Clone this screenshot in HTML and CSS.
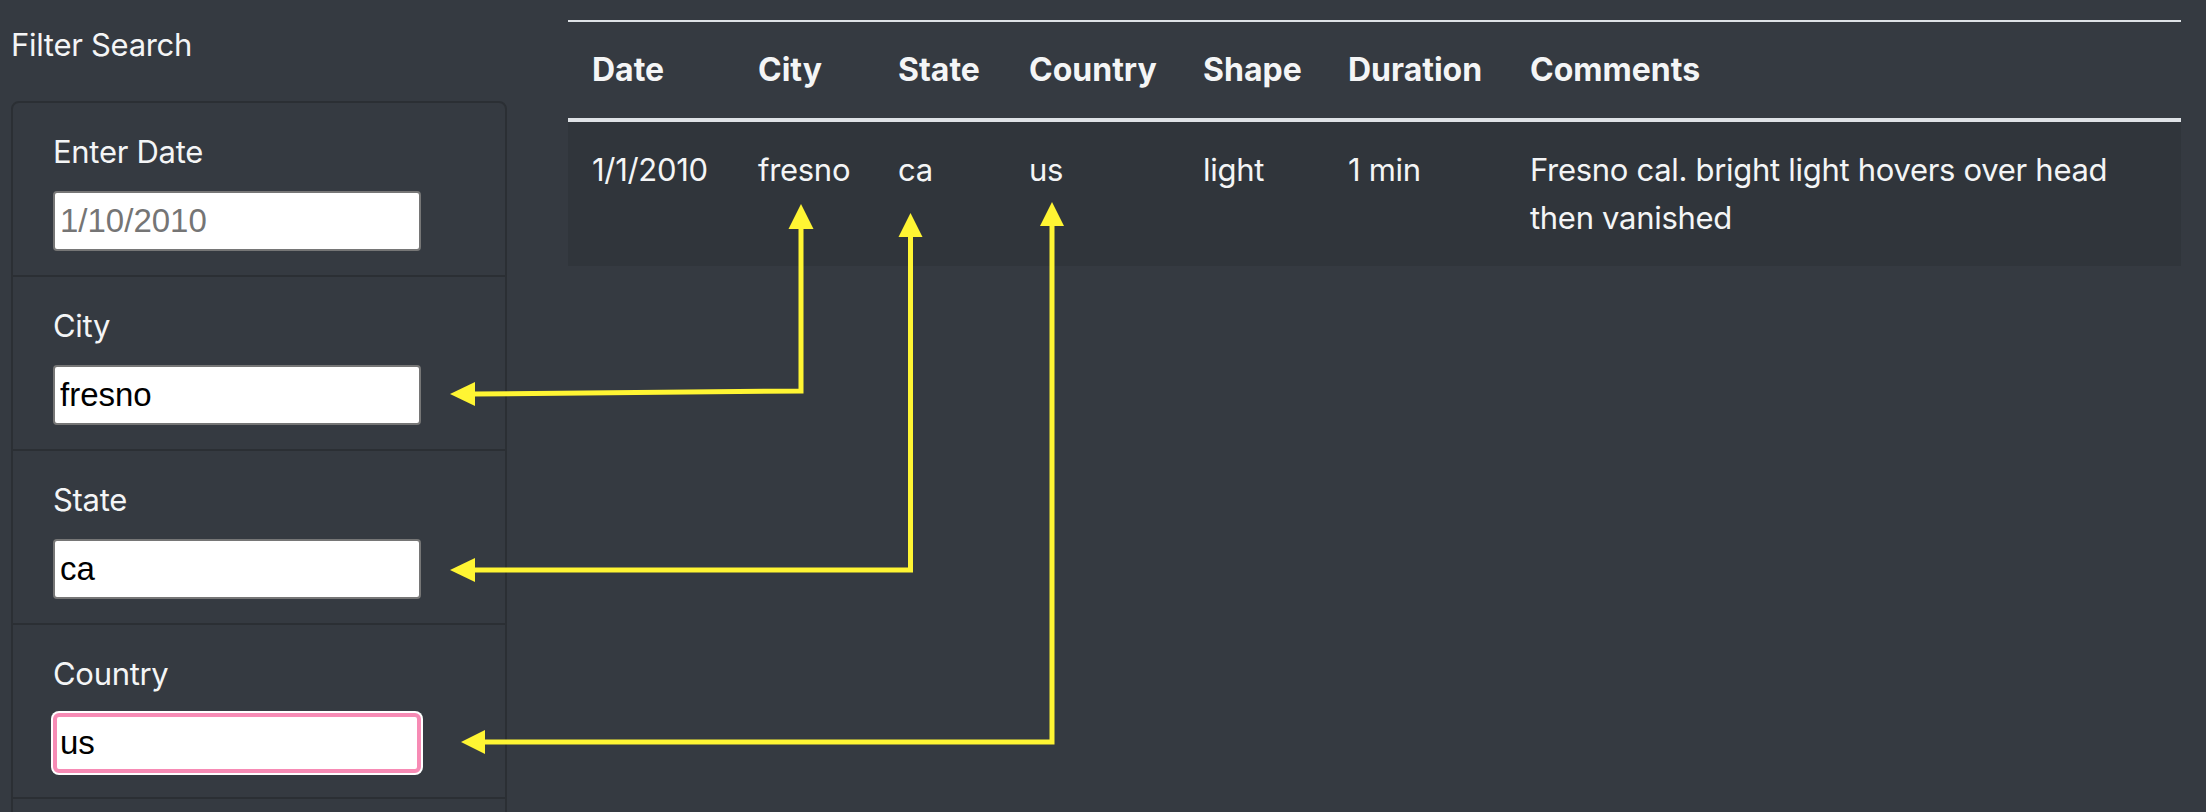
FILE: index.html
```html
<!DOCTYPE html>
<html lang="en">
<head>
<meta charset="utf-8">
<title>UFO Sightings – Filter Search</title>
<link rel="stylesheet" href="styles.css">
</head>
<body>
<div class="page">
  <aside class="sidebar">
    <h5 class="sidebar-title">Filter Search</h5>
    <ul class="filters">
      <li class="filter">
        <label class="filter-label" for="datetime">Enter Date</label>
        <input class="filter-input" id="datetime" type="text" placeholder="1/10/2010">
      </li>
      <li class="filter">
        <label class="filter-label" for="city">City</label>
        <input class="filter-input" id="city" type="text" value="fresno">
      </li>
      <li class="filter">
        <label class="filter-label" for="state">State</label>
        <input class="filter-input" id="state" type="text" value="ca">
      </li>
      <li class="filter">
        <label class="filter-label" for="country">Country</label>
        <input class="filter-input filter-input-focus" id="country" type="text" value="us">
      </li>
      <li class="filter filter-more"></li>
    </ul>
  </aside>
  <main class="results">
    <table class="ufo-table">
      <colgroup>
        <col class="col-date">
        <col class="col-city">
        <col class="col-state">
        <col class="col-country">
        <col class="col-shape">
        <col class="col-duration">
        <col class="col-comments">
      </colgroup>
      <thead>
        <tr>
          <th>Date</th>
          <th>City</th>
          <th>State</th>
          <th>Country</th>
          <th>Shape</th>
          <th>Duration</th>
          <th>Comments</th>
        </tr>
      </thead>
      <tbody>
        <tr>
          <td>1/1/2010</td>
          <td>fresno</td>
          <td>ca</td>
          <td>us</td>
          <td>light</td>
          <td>1 min</td>
          <td>Fresno cal. bright light hovers over head then vanished</td>
        </tr>
      </tbody>
    </table>
  </main>
</div>
<svg class="annotations" width="2206" height="812" viewBox="0 0 2206 812" aria-hidden="true">
  <g class="arrow-line">
    <polyline points="801,228 801,391 474,394"/>
    <polyline points="910.5,236 910.5,570 474,570"/>
    <polyline points="1052,225 1052,742 484,742"/>
  </g>
  <g class="arrow-head">
    <polygon points="801,204 788.5,229 813.5,229"/>
    <polygon points="450,394 475,382 475,406"/>
    <polygon points="910.5,213 898.5,237 922.5,237"/>
    <polygon points="450,570 475,558 475,582"/>
    <polygon points="1052,202 1040,226 1064,226"/>
    <polygon points="461,742 485,730 485,754"/>
  </g>
</svg>
</body>
</html>
```
FILE: styles.css
```css
html, body {
  margin: 0;
  padding: 0;
  overflow: hidden;
  background: #353a41;
}

body {
  position: relative;
  font-family: Inter, "Noto Sans", "Liberation Sans", sans-serif;
  font-size: 31px;
  letter-spacing: -0.3px;
  line-height: 48px;
  color: #f4f5f6;
  width: 2206px;
  height: 812px;
}

.page {
  display: flex;
  align-items: flex-start;
  padding: 20px 0 0 11px;
}

.sidebar {
  width: 496px;
  flex: none;
}

.sidebar-title {
  margin: 0 0 32px 0;
  font-size: 31px;
  font-weight: 400;
  line-height: 48px;
  padding-top: 1px;
}

.filters {
  list-style: none;
  margin: 0;
  padding: 0;
  border: 2px solid #2b2f34;
  border-radius: 8px;
}

.filter {
  display: flex;
  flex-direction: column;
  align-items: flex-start;
  padding: 24px 40px;
  border-bottom: 2px solid #2b2f34;
}

.filter:last-child {
  border-bottom: none;
}

.filter-more {
  height: 124px;
}

.filter-label {
  margin-bottom: 16px;
  font-size: 31px;
  line-height: 48px;
  padding-top: 1px;
  height: 47px;
}

.filter-input {
  box-sizing: border-box;
  width: 368px;
  height: 60px;
  margin: 0;
  padding: 0 5px;
  border: 2px solid #767676;
  border-radius: 4px;
  background: #fff;
  color: #000;
  font-family: "Liberation Sans", Arial, sans-serif;
  font-size: 33px;
  letter-spacing: 0;
  outline: none;
}

.filter-input::placeholder {
  color: #757575;
}

.filter-input-focus {
  border: 4px solid #f78bb5;
  padding: 0 3px;
  border-radius: 6px;
  box-shadow: 0 0 0 2px #ffffff;
}

.results {
  margin-left: 61px;
  width: 1613px;
  flex: none;
}

.ufo-table {
  width: 1613px;
  table-layout: fixed;
  border-collapse: collapse;
  color: #f4f5f6;
}

.col-date { width: 166px; }
.col-city { width: 140px; }
.col-state { width: 131px; }
.col-country { width: 174px; }
.col-shape { width: 145px; }
.col-duration { width: 182px; }
.col-comments { width: 675px; }

.ufo-table th,
.ufo-table td {
  padding: 24px;
  text-align: left;
  vertical-align: top;
  line-height: 48px;
}

.ufo-table th {
  font-size: 32px;
  letter-spacing: 0;
  font-weight: 700;
  border-top: 2px solid #dee2e6;
  border-bottom: 4px solid #dee2e6;
}

.ufo-table td {
  font-weight: 400;
}

.ufo-table tbody tr {
  background: #30353b;
}

.annotations {
  position: absolute;
  left: 0;
  top: 0;
  pointer-events: none;
}

.arrow-line polyline {
  fill: none;
  stroke: #fff533;
  stroke-width: 5;
  stroke-linejoin: miter;
}

.arrow-head polygon {
  fill: #fff533;
}
```
